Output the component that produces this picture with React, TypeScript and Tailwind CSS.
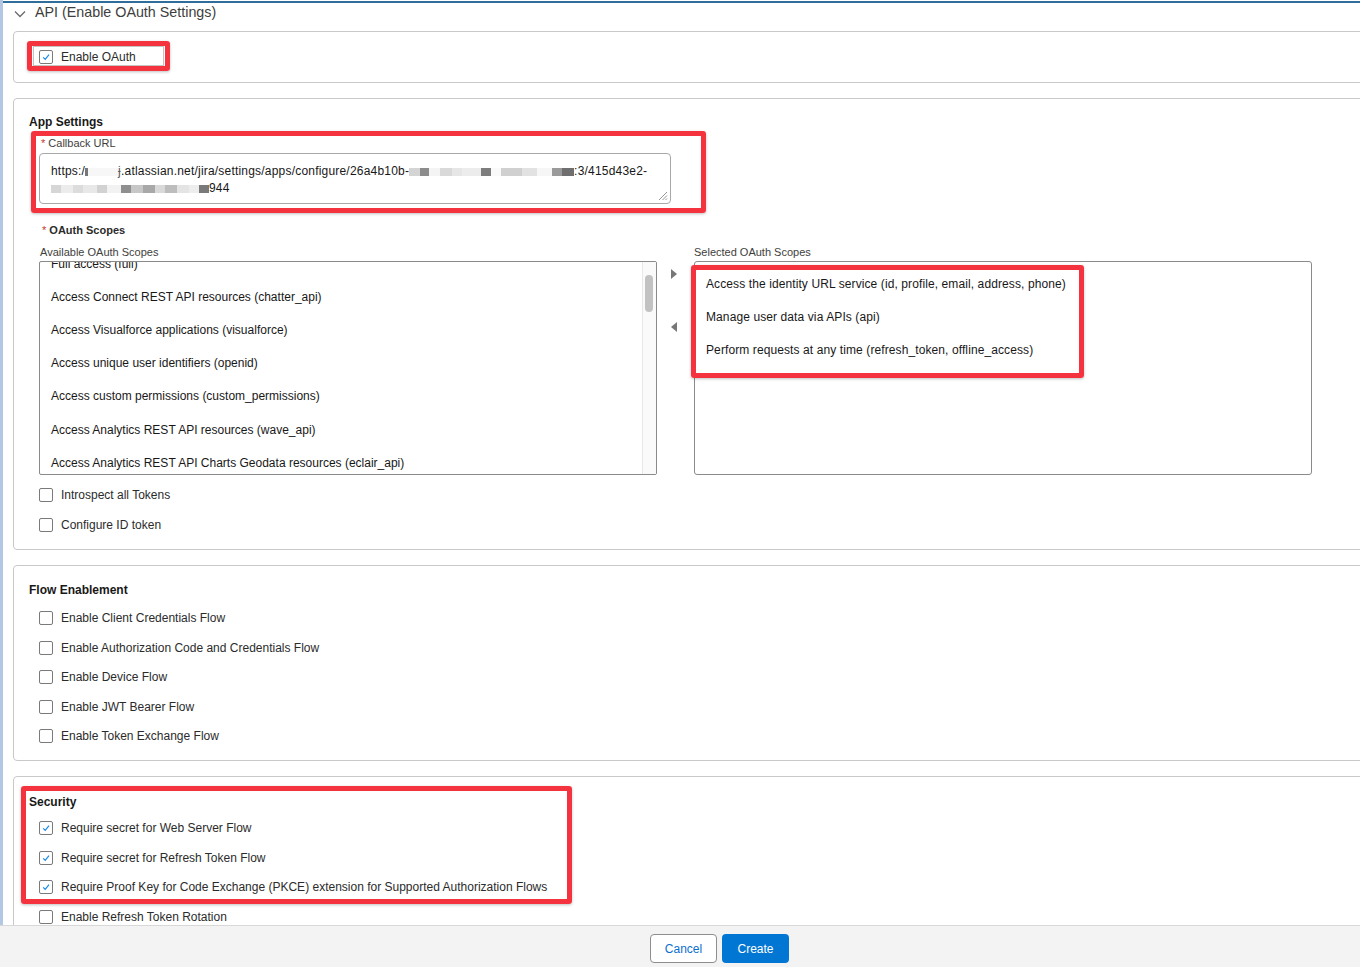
import type { ReactNode } from 'react';

const available = [
  'Full access (full)',
  'Access Connect REST API resources (chatter_api)',
  'Access Visualforce applications (visualforce)',
  'Access unique user identifiers (openid)',
  'Access custom permissions (custom_permissions)',
  'Access Analytics REST API resources (wave_api)',
  'Access Analytics REST API Charts Geodata resources (eclair_api)',
];

const selected = [
  'Access the identity URL service (id, profile, email, address, phone)',
  'Manage user data via APIs (api)',
  'Perform requests at any time (refresh_token, offline_access)',
];

const flows = [
  'Enable Client Credentials Flow',
  'Enable Authorization Code and Credentials Flow',
  'Enable Device Flow',
  'Enable JWT Bearer Flow',
  'Enable Token Exchange Flow',
];

// blurred pieces of the callback url: [width, colour]
const blur1: [number, string][] = [
  [11, '#d4d4d4'], [9, '#8c8c8c'], [11, '#f4f4f4'], [12, '#d9d9d9'], [10, '#e6e6e6'],
  [19, '#ececec'], [10, '#7d7d7d'], [10, '#fafafa'], [21, '#d0d0d0'], [15, '#e2e2e2'],
  [15, '#f6f6f6'], [10, '#9a9a9a'], [12, '#6f6f6f'],
];
const blur2: [number, string][] = [
  [10, '#d6d6d6'], [12, '#ececec'], [10, '#dcdcdc'], [14, '#e8e8e8'], [10, '#d2d2d2'],
  [14, '#f2f2f2'], [10, '#8f8f8f'], [12, '#c7c7c7'], [12, '#a8a8a8'], [10, '#d9d9d9'],
  [12, '#bdbdbd'], [12, '#e4e4e4'], [10, '#ededed'], [10, '#7a7a7a'],
];

function Blur({ parts }: { parts: [number, string][] }) {
  return (
    <span className="inline-flex h-[12px] items-center align-middle">
      {parts.map(([w, c], i) => (
        <span key={i} className="inline-block h-[8px]" style={{ width: w, background: c }} />
      ))}
    </span>
  );
}

function Checkbox({ checked, label }: { checked?: boolean; label: string }) {
  return (
    <div className="flex h-[20px] shrink-0 items-center pl-[10px]">
      <span className="flex h-[14px] w-[14px] items-center justify-center rounded-[2px] border border-[#7a7a7a] bg-white">
        {checked && (
          <svg width="10" height="10" viewBox="0 0 10 10">
            <path d="M2.2 5.4 L4.2 7.3 L8 2.6" fill="none" stroke="#1b8ae6" strokeWidth="1.2" />
          </svg>
        )}
      </span>
      <span className="ml-[8px] text-[12px] text-[#2b2b2b]">{label}</span>
    </div>
  );
}

function Section({ children, className }: { children: ReactNode; className?: string }) {
  return (
    <div
      className={`mr-[-20px] shrink-0 rounded-l-[4px] border border-[#c9c9c9] bg-white pl-[15px] ${className ?? ''}`}
    >
      {children}
    </div>
  );
}

function Heading({ children }: { children: ReactNode }) {
  return <div className="h-[16px] text-[12px] font-bold leading-[16px] text-[#181818]">{children}</div>;
}

function RedBox({ className }: { className: string }) {
  return (
    <div
      className={`pointer-events-none absolute rounded-[3px] border-[5px] border-[#f5333f] shadow-[0_1px_3px_rgba(0,0,0,0.25)] ${className}`}
    />
  );
}

export default function App() {
  return (
    <div className="relative flex h-[967px] w-[1360px] flex-col overflow-hidden bg-white font-['Liberation_Sans',Arial,sans-serif] text-[#181818]">
      <div className="flex min-h-0 flex-1 overflow-hidden">
        <div className="w-[3px] shrink-0 bg-[#b3c6e4]" />
        <div className="flex min-w-0 flex-1 flex-col">
          <div className="mt-px h-[2px] shrink-0 bg-[#2f6d9b]" />
          <div className="flex h-[28px] shrink-0 items-start pt-[1px] pl-[11px]">
            <svg width="12" height="8" viewBox="0 0 12 8" className="mt-[6px]">
              <path d="M1 1.5 L6 6.5 L11 1.5" fill="none" stroke="#6b6b6b" strokeWidth="1.3" />
            </svg>
            <span className="ml-[9px] text-[14.3px] leading-[16px] text-[#3e3e3c]">API (Enable OAuth Settings)</span>
          </div>

          <div className="flex shrink-0 flex-col gap-[15px] pl-[10px]">
            <Section className="py-[15px]">
              <Checkbox checked label="Enable OAuth" />
            </Section>

            <Section className="pt-[15px] pb-[14px]">
              <Heading>App Settings</Heading>
              <div className="mt-[6px] h-[14px] pl-[12px] text-[11px] leading-[14px] text-[#3e3e3c]">
                <span className="text-[#c23934]">*</span> Callback URL
              </div>
              <div className="relative ml-[10px] mt-[3px] h-[51px] w-[632px] rounded-[4px] border border-[#a8a8a8] px-[11px] pt-[9px] text-[12px] leading-[17px] tracking-[0.2px] text-[#181818]">
                <div className="whitespace-nowrap">
                  https:/
                  <span className="inline-block h-[8px] w-[3px] bg-[#777] align-middle" />
                  <span className="inline-block h-[8px] w-[30px] bg-[#f7f7f7] align-middle" />
                  <span className="text-[#555]">ɉ</span>.atlassian.net/jira/settings/apps/configure/26a4b10b-
                  <Blur parts={blur1} />
                  :3/415d43e2-
                </div>
                <div className="whitespace-nowrap">
                  <Blur parts={blur2} />
                  944
                </div>
                <svg width="11" height="11" viewBox="0 0 11 11" className="absolute right-[2px] bottom-[2px]">
                  <path d="M10 2 L2 10 M10 5.5 L5.5 10 M10 8.5 L8.5 10" stroke="#8a8a8a" strokeWidth="0.9" />
                </svg>
              </div>

              <div className="mt-[19px] h-[14px] pl-[13px] text-[11px] font-bold leading-[14px] text-[#2b2b2b]">
                <span className="font-normal text-[#c23934]">*</span> OAuth Scopes
              </div>

              <div className="mt-[8px] flex pl-[10px]">
                <div className="w-[618px]">
                  <div className="h-[14px] pl-px text-[11px] leading-[14px] text-[#3e3e3c]">Available OAuth Scopes</div>
                  <div className="mt-[2px] flex h-[214px] overflow-hidden rounded-[2px] border border-[#8a8a8a]">
                    <div className="min-w-0 flex-1 overflow-hidden">
                      <div className="mt-[-15px]">
                        {available.map(a => (
                          <div key={a} className="flex h-[33.2px] items-center pl-[11px] text-[12px]">
                            {a}
                          </div>
                        ))}
                      </div>
                    </div>
                    <div className="w-[14px] border-l border-[#e8e8e8] bg-[#fafafa] pt-[13px] pl-[2px]">
                      <div className="h-[37px] w-[8px] rounded-full bg-[#c2c2c2]" />
                    </div>
                  </div>
                </div>

                <div className="flex w-[37px] flex-col items-center pt-[24px] pr-[3px]">
                  <svg width="6" height="10" viewBox="0 0 6 10">
                    <path d="M0 0 L6 5 L0 10 Z" fill="#777" />
                  </svg>
                  <svg width="6" height="10" viewBox="0 0 6 10" className="mt-[43px]">
                    <path d="M6 0 L0 5 L6 10 Z" fill="#777" />
                  </svg>
                </div>

                <div className="w-[618px]">
                  <div className="h-[14px] text-[11px] leading-[14px] text-[#3e3e3c]">Selected OAuth Scopes</div>
                  <div className="mt-[2px] h-[214px] rounded-[3px] border border-[#8a8a8a] pt-[5px]">
                    {selected.map(s => (
                      <div key={s} className="flex h-[33px] items-center pl-[11px] text-[12px] tracking-[0.1px]">
                        {s}
                      </div>
                    ))}
                  </div>
                </div>
              </div>

              <div className="mt-[10px] flex flex-col gap-[10px]">
                <Checkbox label="Introspect all Tokens" />
                <Checkbox label="Configure ID token" />
              </div>
            </Section>

            <Section className="pt-[16px] pb-[14px]">
              <Heading>Flow Enablement</Heading>
              <div className="mt-[10px] flex flex-col gap-[9.5px]">
                {flows.map(f => (
                  <Checkbox key={f} label={f} />
                ))}
              </div>
            </Section>

            <Section className="pt-[17px] pb-[20px]">
              <Heading>Security</Heading>
              <div className="mt-[8px] flex flex-col gap-[9.7px]">
                <Checkbox checked label="Require secret for Web Server Flow" />
                <Checkbox checked label="Require secret for Refresh Token Flow" />
                <Checkbox checked label="Require Proof Key for Code Exchange (PKCE) extension for Supported Authorization Flows" />
                <Checkbox label="Enable Refresh Token Rotation" />
              </div>
            </Section>
          </div>
        </div>
      </div>

      <div className="flex h-[42px] shrink-0 items-start border-t border-[#d8d8d8] bg-[#f3f3f3] pt-[8px] pl-[650px]">
        <button className="h-[29px] w-[67px] rounded-[4px] border border-[#8e8e8e] bg-white text-[12px] text-[#0b6fd0]">
          Cancel
        </button>
        <button className="ml-[5px] h-[29px] w-[67px] rounded-[4px] bg-[#0176d3] text-[12px] text-white">
          Create
        </button>
      </div>

      <RedBox className="left-[27px] top-[41px] h-[30px] w-[143px]" />
      <div className="pointer-events-none absolute left-[33px] top-[46px] h-[20px] w-[131px] border border-[#c4c4c4]" />
      <RedBox className="left-[31px] top-[131px] h-[82px] w-[675px]" />
      <RedBox className="left-[691px] top-[265px] h-[113px] w-[393px]" />
      <RedBox className="left-[21px] top-[786px] h-[118px] w-[551px]" />
    </div>
  );
}
